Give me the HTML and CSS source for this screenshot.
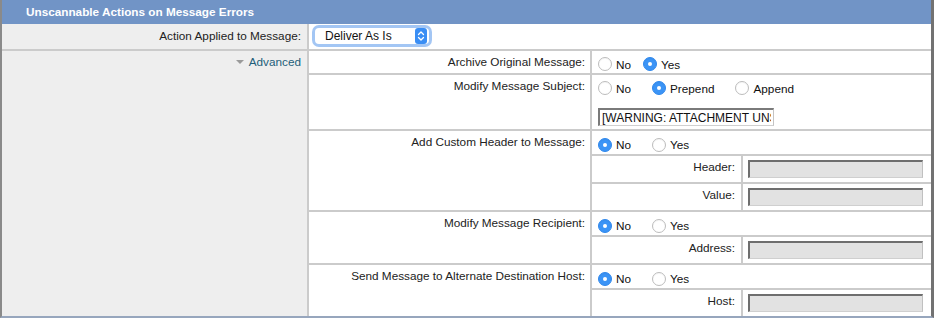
FILE: index.html
```html
<!DOCTYPE html>
<html>
<head>
<title>Unscannable Actions on Message Errors</title>
<link rel="stylesheet" href="styles.css">
</head>
<body>

<div class="panel">
  <div class="panel-head">Unscannable Actions on Message Errors</div>

  <div class="row row-top">
    <div class="cell-label">Action Applied to Message:</div>
    <div class="cell-value">
      <div class="select">
        <div class="select-box">
          <span class="select-text">Deliver As Is</span>
          <span class="select-arrow">
            <svg width="12" height="16" viewBox="0 0 12 16">
              <path d="M3.5 6.5 L6 4 L8.5 6.5" fill="none" stroke="#fff" stroke-width="1.3" stroke-linecap="round" stroke-linejoin="round"/>
              <path d="M3.5 9.5 L6 12 L8.5 9.5" fill="none" stroke="#fff" stroke-width="1.3" stroke-linecap="round" stroke-linejoin="round"/>
            </svg>
          </span>
        </div>
      </div>
    </div>
  </div>

  <div class="row">
    <div class="cell-label cell-adv">
      <span class="disclosure"></span><a class="adv-link" href="#">Advanced</a>
    </div>

    <div class="adv-body">
      <div class="field">
        <div class="field-label">Archive Original Message:</div>
        <div class="field-value">
          <div class="radios radios-tight">
            <label class="opt"><input type="radio" class="radio" name="archive">No</label>
            <label class="opt"><input type="radio" class="radio" name="archive" checked>Yes</label>
          </div>
        </div>
      </div>

      <div class="field">
        <div class="field-label">Modify Message Subject:</div>
        <div class="field-value">
          <div class="radios">
            <label class="opt"><input type="radio" class="radio" name="subject">No</label>
            <label class="opt"><input type="radio" class="radio" name="subject" checked>Prepend</label>
            <label class="opt"><input type="radio" class="radio" name="subject">Append</label>
          </div>
          <input type="text" class="subject-input" value="[WARNING: ATTACHMENT UNSCANNABLE]">
        </div>
      </div>

      <div class="field">
        <div class="field-label">Add Custom Header to Message:</div>
        <div class="field-value sub-group">
          <div class="radios">
            <label class="opt"><input type="radio" class="radio" name="header" checked>No</label>
            <label class="opt"><input type="radio" class="radio" name="header">Yes</label>
          </div>
          <div class="sub-row">
            <div class="sub-label">Header:</div>
            <div class="sub-value"><input type="text" class="sub-input" disabled></div>
          </div>
          <div class="sub-row">
            <div class="sub-label">Value:</div>
            <div class="sub-value"><input type="text" class="sub-input" disabled></div>
          </div>
        </div>
      </div>

      <div class="field">
        <div class="field-label">Modify Message Recipient:</div>
        <div class="field-value sub-group">
          <div class="radios">
            <label class="opt"><input type="radio" class="radio" name="recipient" checked>No</label>
            <label class="opt"><input type="radio" class="radio" name="recipient">Yes</label>
          </div>
          <div class="sub-row">
            <div class="sub-label">Address:</div>
            <div class="sub-value"><input type="text" class="sub-input" disabled></div>
          </div>
        </div>
      </div>

      <div class="field">
        <div class="field-label">Send Message to Alternate Destination Host:</div>
        <div class="field-value sub-group">
          <div class="radios">
            <label class="opt"><input type="radio" class="radio" name="host" checked>No</label>
            <label class="opt"><input type="radio" class="radio" name="host">Yes</label>
          </div>
          <div class="sub-row">
            <div class="sub-label">Host:</div>
            <div class="sub-value"><input type="text" class="sub-input" disabled></div>
          </div>
        </div>
      </div>
    </div>
  </div>
</div>

</body>
</html>
```

FILE: styles.css
```css
* {
  box-sizing: border-box;
}

body {
  margin: 0;
  font-family: "Liberation Sans", Arial, sans-serif;
  font-size: 11.75px;
  color: #222;
  background-color: #fff;
}

.panel {
  width: 934px;
  border-left: 2px solid #8a8a8a;
  border-right: 3px solid #727272;
  border-bottom: 2px solid #97a6bd;
}

.panel-head {
  height: 24px;
  line-height: 24px;
  padding-left: 24px;
  background-color: #7194c6;
  color: #fff;
  font-weight: bold;
}

.row {
  display: flex;
}

.row-top {
  height: 27px;
  border-bottom: 2px solid #cbcbcb;
}

.cell-label {
  width: 307px;
  flex-shrink: 0;
  padding: 5px 6px 0 0;
  background-color: #eee;
  border-right: 2px solid #cbcbcb;
  text-align: right;
  line-height: 14px;
}

.cell-adv {
  padding-top: 4px;
}

.cell-value {
  flex: 1;
  padding: 1px 0 0 3px;
}

/* mac style popup button */
.select {
  display: inline-flex;
  padding: 3px;
  border-radius: 7px;
  background-color: #a3c6f4;
}

.select-box {
  width: 114px;
  height: 16px;
  display: flex;
  align-items: center;
  justify-content: space-between;
  padding-left: 10px;
  background-color: #fff;
  border-radius: 4px;
}

.select-text {
  color: #111;
  font-size: 12px;
}

.select-arrow {
  width: 12px;
  height: 16px;
  margin-right: 2px;
  display: flex;
  background-color: #3a8ef4;
  border-radius: 3px;
}

.disclosure {
  display: inline-block;
  width: 0;
  height: 0;
  border-left: 4px solid transparent;
  border-right: 4px solid transparent;
  border-top: 4px solid #9a9a9a;
  margin-right: 5px;
  vertical-align: 2px;
}

.adv-link {
  color: #1d5e7a;
  text-decoration: none;
}

.adv-body {
  flex: 1;
}

.field {
  display: flex;
  border-bottom: 2px solid #cbcbcb;
}

.field:last-child {
  border-bottom: none;
}

.field-label {
  width: 283px;
  flex-shrink: 0;
  padding: 4px 5px 0 0;
  border-right: 2px solid #cbcbcb;
  text-align: right;
  line-height: 14px;
}

.field-value {
  flex: 1;
}

.radios {
  display: flex;
  align-items: center;
  height: 22px;
  padding: 4px 0 0 6px;
}

.sub-group > .radios {
  height: 23px;
}

.opt {
  display: flex;
  align-items: center;
  color: #111;
}

.opt + .opt {
  margin-left: 21px;
}

.radios-tight .opt + .opt {
  margin-left: 12px;
}

.radio {
  appearance: none;
  -webkit-appearance: none;
  width: 14px;
  height: 14px;
  margin: 0 4px 0 0;
  border-radius: 50%;
  border: 1px solid #bcbcbc;
  background-color: #fff;
  box-shadow: inset 0 1px 1px rgba(0, 0, 0, 0.04);
  position: relative;
}

.radio:checked {
  background-color: #3b94f6;
  border-color: #3088ec;
}

.radio:checked::after {
  content: "";
  position: absolute;
  left: 4px;
  top: 4px;
  width: 4px;
  height: 4px;
  border-radius: 50%;
  background-color: #fff;
}

.subject-input {
  display: block;
  width: 176px;
  height: 18px;
  margin: 11px 0 3px 6px;
  padding: 0 2px;
  font: inherit;
  font-size: 12px;
  color: #111;
  background-color: #fff;
  border-top: 2px solid #7a7a7a;
  border-left: 2px solid #7a7a7a;
  border-right: 1px solid #c4c4c4;
  border-bottom: 1px solid #d0d0d0;
  outline: none;
}

.sub-row {
  display: flex;
  border-top: 2px solid #cbcbcb;
}

.sub-label {
  width: 151px;
  flex-shrink: 0;
  padding: 4px 6px 0 0;
  border-right: 2px solid #cbcbcb;
  text-align: right;
  line-height: 14px;
}

.sub-value {
  flex: 1;
  padding: 4px 0 4px 5px;
}

.sub-input {
  display: block;
  width: 175px;
  height: 18px;
  padding: 0 2px;
  font: inherit;
  background-color: #e2e2e2;
  border-top: 2px solid #6e6e6e;
  border-left: 2px solid #6e6e6e;
  border-right: 1px solid #c0c0c0;
  border-bottom: 1px solid #cfcfcf;
}
```
